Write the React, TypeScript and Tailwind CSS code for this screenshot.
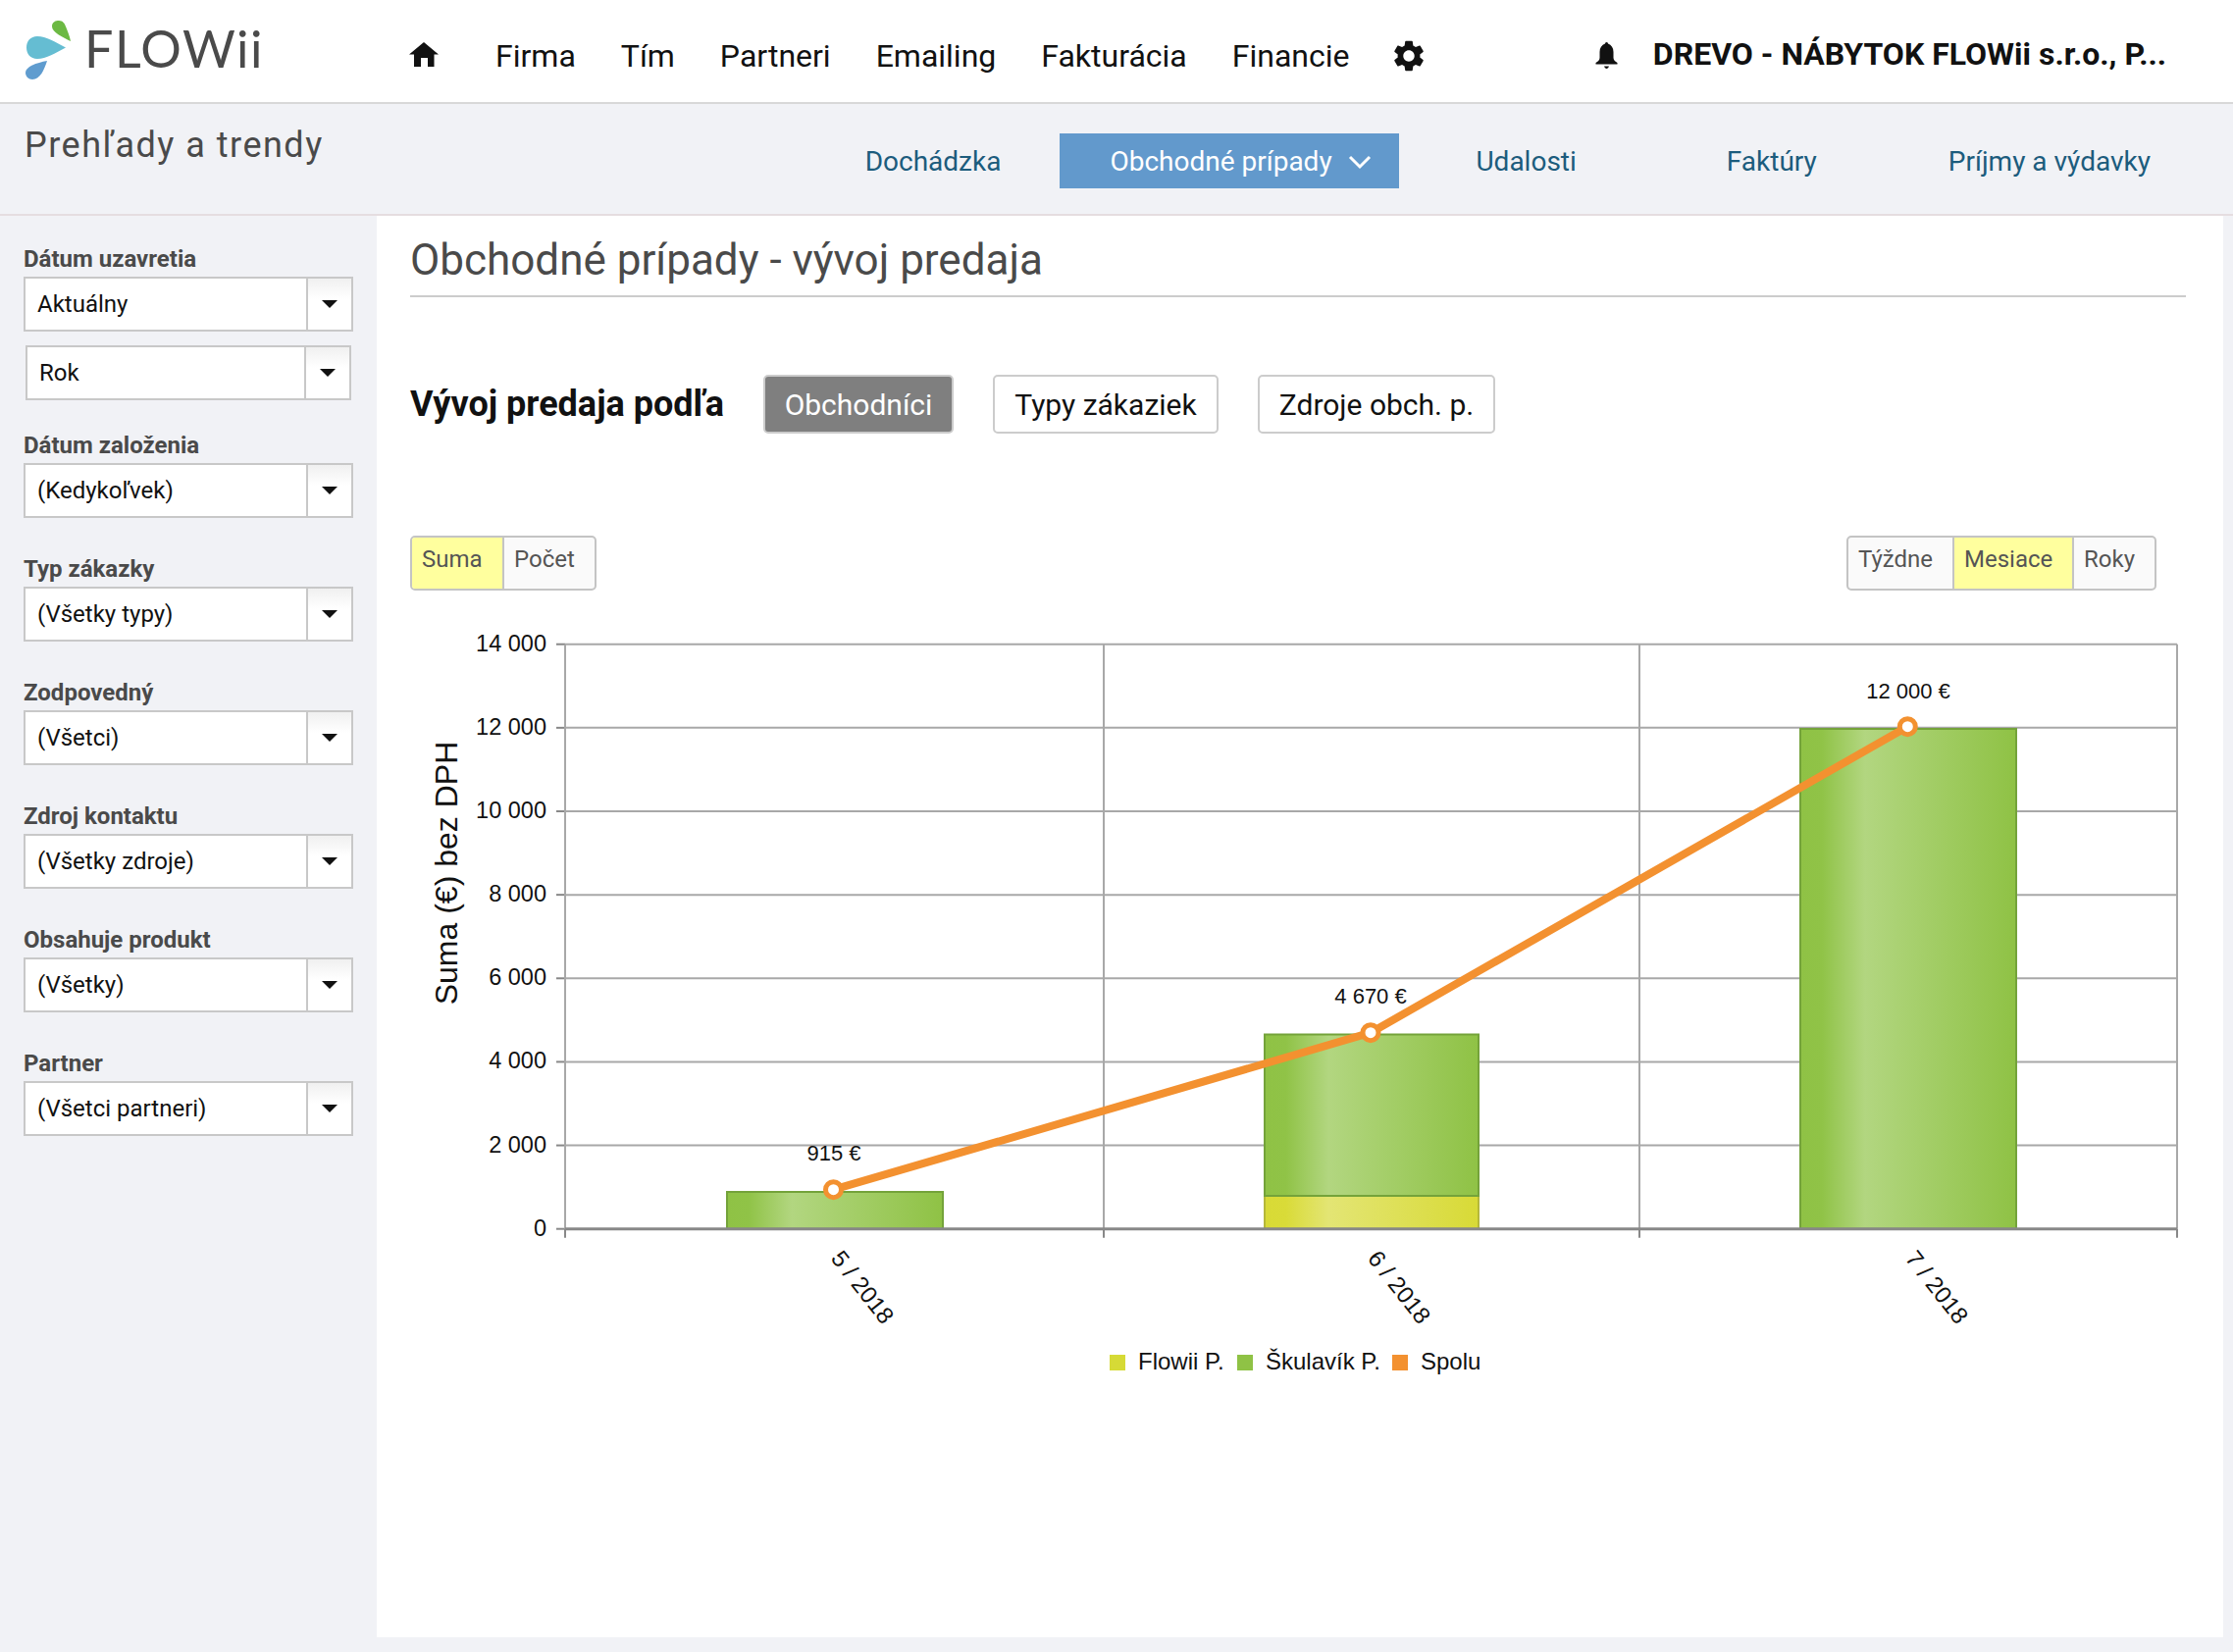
import { MdSettings } from "react-icons/md";

const sans = "font-['Roboto',sans-serif]";

const filters = [
  { label: "Dátum založenia", value: "(Kedykoľvek)" },
  { label: "Typ zákazky", value: "(Všetky typy)" },
  { label: "Zodpovedný", value: "(Všetci)" },
  { label: "Zdroj kontaktu", value: "(Všetky zdroje)" },
  { label: "Obsahuje produkt", value: "(Všetky)" },
  { label: "Partner", value: "(Všetci partneri)" },
];

function Logo() {
  return (
    <svg width="50" height="62" viewBox="24 19 50 62" className="shrink-0">
      <path d="M71 41 C63 37 52 32 52 26 C52 21 56 20 59 20 C63 20 65 23 66 26 C68 31 70 36 71 41 Z" fill="#6cb943" />
      <path d="M66 47.5 C56 53 46 59 37 59 C30 59 26 54 26 47.5 C26 41 30 36 37 36 C46 36 56 42 66 47.5 Z" fill="#65bdd2" />
      <path d="M47 61 C44 70 40 80 32 80 C28 80 25 77 25 73 C25 67 36 63 47 61 Z" fill="#5f9ccf" />
    </svg>
  );
}

function HomeIcon() {
  return (
    <svg width="30" height="25" viewBox="0 0 30 25" className="mt-[43px] shrink-0" fill="#111">
      <path fillRule="evenodd" d="M15 0 L30 12.5 L25.5 12.5 L25.5 25 L19 25 L19 16 L12 16 L12 25 L5 25 L5 12.5 L0 12.5 Z" />
    </svg>
  );
}

function BellIcon() {
  return (
    <svg width="23" height="27" viewBox="0 0 22 27" className="mt-[9px] shrink-0" fill="#111">
      <path d="M11 0c1 0 1.5.8 1.5 1.6C16 3 18 6 18 10v6c0 2 2 4 4 5v1.5H0V21c2-1 4-3 4-5v-6C4 6 6 3 9.5 1.6 9.5.8 10 0 11 0z" />
      <path d="M8.5 24.5h5c-.5 1.5-1.5 2.5-2.5 2.5s-2-1-2.5-2.5z" />
    </svg>
  );
}

function Select({ value, inset }: { value: string; inset?: boolean }) {
  return (
    <div className={`flex h-[56px] border-2 border-[#c8c8c8] bg-white ${inset ? "mx-[2px]" : ""}`}>
      <div className="flex flex-1 items-center pl-[12px] text-[24px] text-[#111]">{value}</div>
      <div className="flex w-[46px] items-center justify-center border-l-2 border-[#c8c8c8] bg-gradient-to-b from-[#f0f0f0] to-white to-40%">
        <div className="h-0 w-0 border-x-[8px] border-t-[8px] border-x-transparent border-t-[#111]" />
      </div>
    </div>
  );
}

function Toggle({ items, active, widths }: { items: string[]; active: string; widths: string[] }) {
  return (
    <div className="flex h-[56px] overflow-hidden rounded-[5px] border-2 border-[#c4c4c4] bg-[#fafafa]">
      {items.map((item, i) => (
        <div
          key={item}
          className={`flex items-start pl-[10px] pt-[4px] text-[24px] text-[#555] ${widths[i]} ${i > 0 ? "border-l-2 border-[#c4c4c4]" : ""} ${item === active ? "bg-[#ffff9e]" : ""}`}
        >
          {item}
        </div>
      ))}
    </div>
  );
}

function Chart() {
  // svg origin is page x=418, y=620
  const ox = 418;
  const oy = 620;
  const X = (x: number) => x - ox;
  const Y = (y: number) => y - oy;
  const left = X(576);
  const right = X(2219);
  const bottom = Y(1252.7);
  const step = 85.14;
  const ticks = [0, 2000, 4000, 6000, 8000, 10000, 12000, 14000];
  const label = (n: number) => (n === 0 ? "0" : `${n / 1000} 000`);
  const arial = "'Liberation Sans',Arial,sans-serif";
  const line = [
    [849.5, 1212.7],
    [1397, 1052.7],
    [1944.3, 740.7],
  ];
  return (
    <svg width="1810" height="800" viewBox="0 0 1810 800" className="block" style={{ fontFamily: arial }}>
      <defs>
        <linearGradient id="grn" x1="0" x2="1" y1="0" y2="0">
          <stop offset="0" stopColor="#8fc245" />
          <stop offset="0.1" stopColor="#90c347" />
          <stop offset="0.3" stopColor="#b2d680" />
          <stop offset="1" stopColor="#8fc245" />
        </linearGradient>
        <linearGradient id="yel" x1="0" x2="1" y1="0" y2="0">
          <stop offset="0" stopColor="#d8da36" />
          <stop offset="0.1" stopColor="#d9db38" />
          <stop offset="0.3" stopColor="#e3e574" />
          <stop offset="1" stopColor="#d8da36" />
        </linearGradient>
      </defs>
      {ticks.map((t, i) => {
        const y = bottom - i * step;
        return (
          <g key={t}>
            {i > 0 && <line x1={left} x2={right} y1={y} y2={y} stroke="#a8a8a8" strokeWidth="2" />}
            <line x1={left - 9} x2={left} y1={y} y2={y} stroke="#888" strokeWidth="2" />
            <text x={X(557)} y={y + 7} textAnchor="end" fontSize="23.5" fill="#111">
              {label(t)}
            </text>
          </g>
        );
      })}
      {[576, 1125, 1671, 2219].map((x) => (
        <g key={x}>
          <line x1={X(x)} x2={X(x)} y1={Y(656.7)} y2={bottom} stroke="#a8a8a8" strokeWidth="2" />
          <line x1={X(x)} x2={X(x)} y1={bottom} y2={bottom + 9} stroke="#888" strokeWidth="2" />
        </g>
      ))}
      <text
        transform={`translate(${X(466)} ${Y(890)}) rotate(-90)`}
        textAnchor="middle"
        fontSize="32"
        fill="#111"
      >
        Suma (€) bez DPH
      </text>

      <rect x={X(741)} y={Y(1215)} width="220" height={bottom - Y(1215)} fill="url(#grn)" stroke="#74a33a" strokeWidth="2" />
      <rect x={X(1289)} y={Y(1219)} width="218" height={bottom - Y(1219)} fill="url(#yel)" stroke="#b5b83a" strokeWidth="2" />
      <rect x={X(1289)} y={Y(1054.5)} width="218" height={Y(1219) - Y(1054.5)} fill="url(#grn)" stroke="#74a33a" strokeWidth="2" />
      <rect x={X(1835)} y={Y(743)} width="220" height={bottom - Y(743)} fill="url(#grn)" stroke="#74a33a" strokeWidth="2" />

      <line x1={left} x2={right} y1={bottom} y2={bottom} stroke="#888" strokeWidth="3" />

      <polyline
        points={line.map(([x, y]) => `${X(x)},${Y(y)}`).join(" ")}
        fill="none"
        stroke="#f39130"
        strokeWidth="8"
        strokeLinejoin="round"
      />
      {line.map(([x, y]) => (
        <circle key={x} cx={X(x)} cy={Y(y)} r="8" fill="#fff" stroke="#f39130" strokeWidth="5" />
      ))}

      <text x={X(850)} y={Y(1183)} textAnchor="middle" fontSize="22" fill="#111">915 €</text>
      <text x={X(1397)} y={Y(1023)} textAnchor="middle" fontSize="22" fill="#111">4 670 €</text>
      <text x={X(1945)} y={Y(712)} textAnchor="middle" fontSize="22" fill="#111">12 000 €</text>

      {[
        ["5 / 2018", 846],
        ["6 / 2018", 1393],
        ["7 / 2018", 1941],
      ].map(([t, x]) => (
        <text
          key={t}
          transform={`translate(${X(x as number)} ${Y(1283)}) rotate(52)`}
          fontSize="24"
          fill="#111"
        >
          {t}
        </text>
      ))}

      <rect x={X(1131)} y={Y(1381)} width="16" height="16" fill="#d6da36" />
      <text x={X(1160)} y={Y(1396)} fontSize="24" fill="#111">Flowii P.</text>
      <rect x={X(1261)} y={Y(1381)} width="16" height="16" fill="#8fc245" />
      <text x={X(1290)} y={Y(1396)} fontSize="24" fill="#111">Škulavík P.</text>
      <rect x={X(1419)} y={Y(1381)} width="16" height="16" fill="#f39130" />
      <text x={X(1448)} y={Y(1396)} fontSize="24" fill="#111">Spolu</text>
    </svg>
  );
}

export default function App() {
  return (
    <div className={`flex h-[1684px] w-[2276px] flex-col overflow-hidden bg-[#f1f2f6] ${sans}`}>
      {/* Top nav */}
      <header className="flex h-[106px] shrink-0 items-start border-b-2 border-[#d8d8d8] bg-white pl-[25px] pr-[68px]">
        <div className="mt-[20px] flex w-[392px] shrink-0 items-start">
          <Logo />
          <span className="mt-[-2px] ml-[11px] font-['Lato',sans-serif] text-[52px] leading-[62px] tracking-[1.5px] text-[#4a4a4a]">
            FLOWii
          </span>
        </div>
        <HomeIcon />
        <nav className="mt-[36px] ml-[58px] flex items-center gap-[46px] text-[32px] leading-[42px] text-[#111]">
          <span>Firma</span>
          <span>Tím</span>
          <span>Partneri</span>
          <span>Emailing</span>
          <span>Fakturácia</span>
          <span>Financie</span>
        </nav>
        <MdSettings className="mt-[38px] ml-[42px] shrink-0 text-[#111]" size={38} />
        <div className="mt-[34px] ml-auto flex items-start gap-[36px]">
          <BellIcon />
          <span className="text-[32px] font-bold leading-[42px] text-[#111]">DREVO - NÁBYTOK FLOWii s.r.o., P...</span>
        </div>
      </header>

      {/* Section bar */}
      <div className="flex h-[114px] shrink-0 items-start border-b-2 border-[#e5dde0] pl-[25px] pr-[84px]">
        <h1 className="mt-[19px] text-[36px] font-normal leading-[46px] tracking-[1.5px] text-[#4a4a4a]">Prehľady a trendy</h1>
        <div className="mt-[30px] ml-auto flex items-center text-[28px] text-[#1c5c7d]">
          <span className="pt-[2px]">Dochádzka</span>
          <div className="ml-[60px] flex h-[56px] w-[346px] items-center gap-[16px] bg-[#6299cc] pl-[51px] pt-[2px] text-white">
            <span>Obchodné prípady</span>
            <svg width="24" height="15" viewBox="0 0 24 15" fill="none" stroke="#fff" strokeWidth="3">
              <path d="M2 2l10 10L22 2" />
            </svg>
          </div>
          <span className="ml-[78px] pt-[2px]">Udalosti</span>
          <span className="ml-[153px] pt-[2px]">Faktúry</span>
          <span className="ml-[134px] pt-[2px]">Príjmy a výdavky</span>
        </div>
      </div>

      <div className="flex min-h-0">
        {/* Filters */}
        <aside className="w-[384px] shrink-0 pl-[24px] pr-[24px] pt-[28px]">
          <div className="pb-[2px] text-[24px] font-bold leading-[32px] text-[#4a4a4a]">Dátum uzavretia</div>
          <Select value="Aktuálny" />
          <div className="mt-[14px]">
            <Select value="Rok" inset />
          </div>
          {filters.map((f, i) => (
            <div key={f.label} className={i === 0 ? "mt-[30px]" : "mt-[36px]"}>
              <div className="pb-[2px] text-[24px] font-bold leading-[32px] text-[#4a4a4a]">{f.label}</div>
              <Select value={f.value} />
            </div>
          ))}
        </aside>

        {/* Content */}
        <main className="h-[1449px] w-[1882px] bg-white pl-[34px] pr-[38px]">
          <div className="border-b-2 border-[#ccc] pb-[10px] pt-[19px] text-[44px] leading-[52px] text-[#4a4a4a]">
            Obchodné prípady - vývoj predaja
          </div>
          <div className="mt-[79px] flex items-center">
            <span className="w-[360px] text-[36px] font-bold text-[#111]">Vývoj predaja podľa</span>
            <button className="h-[60px] w-[194px] rounded-[5px] border-2 border-[#ccc] bg-[#7f7f7f] text-[30px] text-white">Obchodníci</button>
            <button className="ml-[40px] h-[60px] w-[230px] rounded-[5px] border-2 border-[#ccc] bg-white text-[30px] text-[#111]">Typy zákaziek</button>
            <button className="ml-[40px] h-[60px] w-[242px] rounded-[5px] border-2 border-[#ccc] bg-white text-[30px] text-[#111]">Zdroje obch. p.</button>
          </div>
          <div className="mt-[104px] flex justify-between pr-[30px]">
            <Toggle items={["Suma", "Počet"]} active="Suma" widths={["w-[92px]", "w-[94px]"]} />
            <Toggle items={["Týždne", "Mesiace", "Roky"]} active="Mesiace" widths={["w-[106px]", "w-[122px]", "w-[84px]"]} />
          </div>
          <div className="mt-[18px]">
            <Chart />
          </div>
        </main>
      </div>
    </div>
  );
}
